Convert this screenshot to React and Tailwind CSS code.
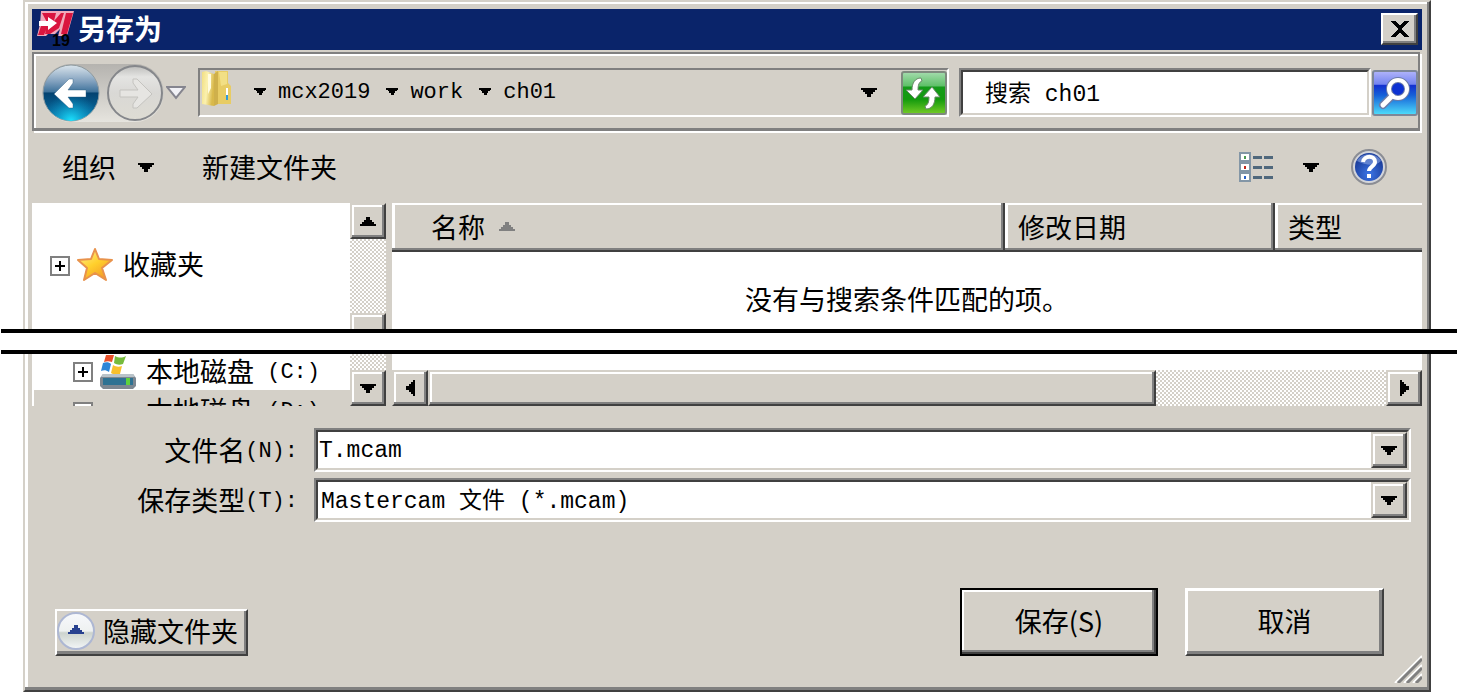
import React from 'react';
import clsx from 'clsx';

const MONO = "font-['Liberation_Mono','Noto_Sans_CJK_SC',monospace]";
const RAISED =
  'flex shrink-0 items-center justify-center bg-[#d4d0c8] border-2 border-t-[#d4d0c8] border-l-[#d4d0c8] border-r-[#404040] border-b-[#404040] shadow-[inset_-2px_-2px_0_#808080,inset_2px_2px_0_#fff]';
const DITHER = 'bg-[repeating-conic-gradient(#d4d0c8_0_25%,#fff_0_50%)] bg-[length:4px_4px]';
const FRAME =
  'ml-[23px] mr-[27px] border-l-2 border-r-2 border-l-[#d4d0c8] border-r-[#404040] bg-[#d4d0c8] px-[7px]';

const Mono = ({ children, className }) => (
  <span className={clsx(MONO, 'text-[22px] whitespace-pre', className)}>{children}</span>
);

const arrowPaths = {
  down: 'M0 0h16v2H14v2H12v2H10v3H6V6H4V4H2V2H0z',
  up: 'M0 9h16V7H14V5H12V3H10V0H6v3H4v2H2v2H0z',
  left: 'M9 0v16H7V14H5V12H3V10H0V6h3V4h2V2h2V0z',
  right: 'M0 0v16h2V14h2V12h2V10h3V6H6V4H4V2H2V0z',
};

const Arrow = ({ dir = 'down', className = 'h-[9px] w-4' }) => (
  <svg
    viewBox={dir === 'left' || dir === 'right' ? '0 0 9 16' : '0 0 16 9'}
    preserveAspectRatio="none"
    shapeRendering="crispEdges"
    fill="currentColor"
    className={clsx('shrink-0', className)}
  >
    <path d={arrowPaths[dir]} />
  </svg>
);

const AppLogo = () => (
  <svg viewBox="0 0 37 38" className="h-[38px] w-[37px] shrink-0 overflow-visible">
    <path d="M4 0h33l-7 25h-9l2-7-5 5h-7l-2 2H0l3-12z" fill="#f0a9ba" />
    <path d="M5 2h14l-2 8 7-8h3l-5 15-9 6H8l1-4-2 5H1l3-9h8z" fill="#d9153f" />
    <path d="M29 2h7l-6 21h-6z" fill="#d9153f" />
    <path d="M2 10h9V6l9 6-9 7v-4H2z" fill="#fff" />
    <text x="15" y="35" fontFamily="Liberation Sans" fontWeight="bold" fontSize="16" fill="#000">19</text>
  </svg>
);

const BackIcon = () => (
  <svg viewBox="0 0 58 58" className="size-[58px]">
    <defs>
      <linearGradient id="backTop" x1="0" y1="0" x2="0" y2="1">
        <stop offset="0" stopColor="#dbe5ec" />
        <stop offset="0.3" stopColor="#7f9fbd" />
        <stop offset="0.48" stopColor="#3e729b" />
        <stop offset="0.5" stopColor="#034270" />
        <stop offset="1" stopColor="#0a78ad" />
      </linearGradient>
      <radialGradient id="backGlow" cx="0.5" cy="1" r="0.5">
        <stop offset="0" stopColor="#1ce4ff" />
        <stop offset="1" stopColor="#0a9bd3" stopOpacity="0" />
      </radialGradient>
    </defs>
    <circle cx="29" cy="29" r="28" fill="url(#backTop)" stroke="#8e9a9f" strokeWidth="1" />
    <circle cx="29" cy="29" r="28" fill="url(#backGlow)" />
    <path d="M12 30 27 15h4v4l-5 7h18v7H26l5 7v4h-4z" fill="#fff" stroke="#2b5b80" strokeOpacity="0.4" />
  </svg>
);

const ForwardIcon = () => (
  <svg viewBox="0 0 58 58" className="size-[58px]">
    <defs>
      <linearGradient id="fwd" x1="0" y1="0" x2="0" y2="1">
        <stop offset="0" stopColor="#bdbdbb" />
        <stop offset="0.2" stopColor="#e4e4e2" />
        <stop offset="0.5" stopColor="#d9d8d5" />
        <stop offset="1" stopColor="#dedcd3" />
      </linearGradient>
    </defs>
    <circle cx="29" cy="29" r="27" fill="url(#fwd)" stroke="#85878b" strokeWidth="2" />
    <path d="M46 30 31 15h-4v4l5 7H14v7h18l-5 7v4h4z" fill="#e6e5e2" stroke="#c4c3bf" />
  </svg>
);

const FolderIcon = () => (
  <svg viewBox="0 0 32 37" className="h-[37px] w-8 shrink-0">
    <defs>
      <linearGradient id="folder" x1="0" y1="0" x2="1" y2="0.3">
        <stop offset="0" stopColor="#f1de81" />
        <stop offset="0.5" stopColor="#fbf1af" />
        <stop offset="1" stopColor="#d9b94b" />
      </linearGradient>
    </defs>
    <path d="M14 1h13v12l3 3v18H15z" fill="#e8cc64" />
    <path d="M18 2h8v12l-6 2z" fill="#f2df85" />
    <path d="m1 2 4-1 8 3v32L1 34z" fill="url(#folder)" />
    <path d="m13 4 4-3v33l-4 2z" fill="#cfb04b" />
    <path d="M7 4h3v14l-3 6z" fill="#fffbe0" />
    <path d="M25 18h2v11h-2z" fill="#fff" />
    <path d="M25 25h2v5h-2z" fill="#2f9bdb" />
  </svg>
);

const RefreshIcon = () => (
  <svg viewBox="0 0 46 44" className="h-11 w-[46px]">
    <defs>
      <linearGradient id="refresh" x1="0" y1="0" x2="0" y2="1">
        <stop offset="0" stopColor="#a5dcae" />
        <stop offset="0.33" stopColor="#5fc069" />
        <stop offset="0.36" stopColor="#149a1a" />
        <stop offset="0.65" stopColor="#139a0e" />
        <stop offset="1" stopColor="#76cc26" />
      </linearGradient>
    </defs>
    <rect x="1" y="1" width="44" height="42" rx="2" fill="url(#refresh)" stroke="#7e8a7e" strokeWidth="2" />
    <path
      d="M20 7c-6 0-9 5-9 12H5l9 9 8-9h-5c0-5 1-8 4-9zM25 38c6 0 9-5 9-12h5l-8-10-9 10h6c0 5-1 8-4 9z"
      fill="#fff"
      stroke="#6a8a6a"
    />
  </svg>
);

const SearchIcon = () => (
  <svg viewBox="0 0 46 46" className="size-[46px]">
    <defs>
      <linearGradient id="search" x1="0" y1="0" x2="0" y2="1">
        <stop offset="0" stopColor="#b2b5fb" />
        <stop offset="0.3" stopColor="#7484f0" />
        <stop offset="0.33" stopColor="#1230cf" />
        <stop offset="0.55" stopColor="#1560d8" />
        <stop offset="1" stopColor="#4fe0fb" />
      </linearGradient>
    </defs>
    <rect x="1" y="1" width="44" height="44" rx="2" fill="url(#search)" stroke="#7d8798" strokeWidth="2" />
    <path d="m20 26-9 9" stroke="#6b7ba8" strokeWidth="8" strokeLinecap="round" />
    <circle cx="26" cy="19" r="9" fill="#0d32d2" stroke="#6b7ba8" strokeWidth="6" />
    <path d="m20 26-9 9" stroke="#fff" strokeWidth="5" strokeLinecap="round" />
    <circle cx="26" cy="19" r="9" fill="none" stroke="#fff" strokeWidth="4" />
  </svg>
);

const ViewsIcon = () => (
  <svg viewBox="0 0 34 30" shapeRendering="crispEdges" className="h-[30px] w-[34px]">
    {['#4d9a52', '#c0281c', '#2a63c8'].map((color, i) => (
      <g key={color} transform={`translate(0 ${i * 10})`}>
        <rect x="1" y="1" width="10" height="8" fill="#fff" stroke="#8396a6" strokeWidth="2" />
        <rect x="5" y="4" width="2" height="3" fill={color} />
        <path d="M14 5h9M25 5h9" stroke="#50687c" strokeWidth="3" />
      </g>
    ))}
  </svg>
);

const HelpIcon = () => (
  <svg viewBox="0 0 36 36" className="size-9">
    <defs>
      <radialGradient id="help" cx="0.5" cy="0.75" r="0.6">
        <stop offset="0" stopColor="#3d76e6" />
        <stop offset="1" stopColor="#1c3f9e" />
      </radialGradient>
    </defs>
    <circle cx="18" cy="18" r="17" fill="#d3d5db" stroke="#8b8d94" strokeWidth="2" />
    <circle cx="18" cy="18" r="14" fill="url(#help)" />
    <path d="M6 12C10 3 26 3 30 12 24 18 14 16 6 12z" fill="#8ba6e4" opacity="0.6" />
    <path d="M12 13c1-7 12-7 12 0 0 4-6 5-6 9" fill="none" stroke="#fff" strokeWidth="4" />
    <rect x="16" y="25" width="4" height="4" fill="#fff" />
  </svg>
);

const StarIcon = () => (
  <svg viewBox="0 0 36 34" className="h-[34px] w-9 shrink-0">
    <defs>
      <linearGradient id="star" x1="0" y1="0" x2="0.7" y2="1">
        <stop offset="0" stopColor="#fff2a0" />
        <stop offset="0.55" stopColor="#ffd02c" />
        <stop offset="1" stopColor="#f39a26" />
      </linearGradient>
    </defs>
    <path
      d="m18 2 4 10 13 1-10 8 4 12-11-7-11 7 3-12-9-8 13-1z"
      fill="url(#star)"
      stroke="#e8924c"
      strokeWidth="2"
      strokeLinejoin="round"
    />
  </svg>
);

const DriveIcon = () => (
  <svg viewBox="0 0 36 34" className="h-[34px] w-9 shrink-0">
    <path d="M6 0c3-1 5-1 8 0l-2 7c-3-1-5-1-8 0z" fill="#e8502a" />
    <path d="M15 1c4 2 7 2 11 0l-3 8c-3 1-6 1-9-1z" fill="#76bb3c" />
    <path d="M3 8c3-1 6-1 8 1l-2 8c-3-2-5-2-8-1z" fill="#2c86d8" />
    <path d="M13 10c3 2 6 2 9 1l-2 8c-3 1-6 1-9-1z" fill="#f8c02c" />
    <path d="M3 19h30l3 4v8l-3 3H3l-3-3v-8z" fill="#7d8791" />
    <path d="M3 19h30l2 3H1z" fill="#b9c3c9" />
    <path d="M3 23h30v7H3z" fill="#2e7293" />
    <path d="M26 23h4v7h-4z" fill="#5fd23c" />
  </svg>
);

const CollapseIcon = () => (
  <svg viewBox="0 0 38 38" className="size-[38px] shrink-0">
    <defs>
      <linearGradient id="collapse" x1="0" y1="0" x2="0" y2="1">
        <stop offset="0" stopColor="#f7f9fc" />
        <stop offset="0.5" stopColor="#eef1f1" />
        <stop offset="0.55" stopColor="#ccd3cd" />
        <stop offset="1" stopColor="#f3f6f7" />
      </linearGradient>
    </defs>
    <circle cx="19" cy="19" r="18" fill="url(#collapse)" stroke="#adb7d3" strokeWidth="2" />
    <path d="M11 22h16v-2h-2v-2h-2v-2h-2v-3h-4v3h-2v2h-2v2h-2z" fill="#27418f" shapeRendering="crispEdges" />
  </svg>
);

const Expander = () => (
  <button aria-label="展开" className="relative size-5 shrink-0 border-2 border-[#808080] bg-white">
    <span className="absolute left-[3px] top-[7px] h-0.5 w-2.5 bg-black" />
    <span className="absolute left-[7px] top-[3px] h-2.5 w-0.5 bg-black" />
  </button>
);

const Crumb = ({ children }) => (
  <div className="flex items-center">
    <Arrow className="h-[7px] w-3" />
    <a href="#" className="ml-3 mr-4 pb-1">
      <Mono>{children}</Mono>
    </a>
  </div>
);

const Combo = ({ children }) => (
  <div className="flex h-11 min-w-0 flex-1 border-2 border-t-[#808080] border-l-[#808080] border-r-white border-b-white bg-white">
    <div className="flex min-w-0 flex-1 border-2 border-t-[#404040] border-l-[#404040] border-r-[#d4d0c8] border-b-[#d4d0c8]">
      {children}
      <button aria-label="展开列表" className={clsx(RAISED, 'w-9')}>
        <Arrow />
      </button>
    </div>
  </div>
);

const columns = ['名称', '修改日期', '类型'];

export default function App() {
  return (
    <div className="min-w-[1100px] bg-white font-['Noto_Sans_CJK_SC',sans-serif] text-[27px] leading-9 text-black">
      {/* Upper part of the dialog */}
      <div className={clsx(FRAME, 'border-t-2 border-t-[#d4d0c8] pt-[7px] shadow-[inset_-2px_0_0_#808080,inset_3px_2px_0_#fff]')}>
        <header className="flex h-[41px] items-center bg-[#0a246a] pl-[5px] pr-1 text-white">
          <AppLogo />
          <h1 className="ml-1 flex-1 pb-1 text-[28px] font-bold">另存为</h1>
          <button
            aria-label="关闭"
            className="mb-0.5 flex h-8 w-[37px] items-center justify-center border-2 border-t-white border-l-white border-r-[#404040] border-b-[#404040] bg-[#d4d0c8] text-black shadow-[inset_-2px_-2px_0_#808080]"
          >
            <svg viewBox="0 0 18 16" className="h-4 w-[18px]" shapeRendering="crispEdges">
              <path d="M0 0h5l4 5 4-5h5l-7 8 7 8h-5l-4-5-4 5H0l7-8z" />
            </svg>
          </button>
        </header>

        {/* Navigation */}
        <div className="mb-0.5 mr-0.5 mt-0.5 flex h-[79px] items-center border-2 border-b-[3px] border-[#808080] pl-2 pt-[3px] shadow-[inset_2px_2px_0_#fff,2px_2px_0_#fff]">
          <div className="flex gap-1.5 rounded-full bg-linear-to-b from-[#b5b3af] to-[#e6e4de]">
            <button aria-label="后退"><BackIcon /></button>
            <button aria-label="前进"><ForwardIcon /></button>
          </div>
          <button aria-label="最近位置" className="ml-0.5 mr-3">
            <svg viewBox="0 0 20 14" className="h-3.5 w-5">
              <path d="M1 1h18l-9 11z" fill="#f1f1f6" stroke="#85858f" strokeWidth="2" />
            </svg>
          </button>
          <nav className="flex h-[49px] min-w-0 flex-1 items-center border-2 border-t-[#808080] border-l-[#808080] border-r-white border-b-white pl-px">
            <div className="pb-2"><FolderIcon /></div>
            <div className="ml-[21px] flex flex-1 items-center pb-0.5">
              <Crumb>mcx2019</Crumb>
              <Crumb>work</Crumb>
              <Crumb>ch01</Crumb>
            </div>
            <button aria-label="历史记录" className="mr-6"><Arrow /></button>
            <button aria-label="刷新"><RefreshIcon /></button>
          </nav>
          <div className="ml-2.5 mr-px h-[49px] w-[412px] border-2 border-t-[#808080] border-l-[#808080] border-r-white border-b-white">
            <input
              type="text"
              aria-label="搜索"
              placeholder="搜索 ch01"
              className={clsx(MONO, 'block h-full w-full border-2 border-t-[#404040] border-l-[#404040] border-r-[#d4d0c8] border-b-[#d4d0c8] bg-white pl-[22px] pt-1 text-[23px] outline-none placeholder:text-black')}
            />
          </div>
          <button aria-label="开始搜索"><SearchIcon /></button>
        </div>

        {/* Toolbar */}
        <div className="flex h-[70px] items-center pb-0.5 pl-[30px] pr-[35px]">
          <button className="flex items-center gap-[22px]">
            组织
            <Arrow />
          </button>
          <button className="ml-12">新建文件夹</button>
          <button aria-label="视图" className="ml-auto"><ViewsIcon /></button>
          <button aria-label="更多视图" className="ml-[30px] mr-8"><Arrow /></button>
          <button aria-label="帮助"><HelpIcon /></button>
        </div>

        <div className="flex h-[126px] overflow-hidden">
          <div className="flex w-[318px] shrink-0 items-center bg-white pl-[18px]">
            <Expander />
            <span className="ml-[7px] pb-1"><StarIcon /></span>
            <span className="ml-2.5 pb-1">收藏夹</span>
          </div>
          <div className={clsx(DITHER, 'flex w-9 shrink-0 flex-col justify-between')}>
            <button aria-label="向上滚动" className={clsx(RAISED, 'h-9')}><Arrow dir="up" /></button>
            <div className="h-4 overflow-hidden">
              <div className={clsx(RAISED, 'h-9')} />
            </div>
          </div>
          <div className="ml-1.5 min-w-0 flex-1 bg-white">
            <table className="w-full table-fixed border-separate border-spacing-0">
              <colgroup>
                <col />
                <col className="w-[270px]" />
                <col className="w-[147px]" />
              </colgroup>
              <thead>
                <tr>
                  {columns.map((name, i) => (
                    <th
                      key={name}
                      className={clsx(
                        'h-[49px] border-b-2 border-[#404040] bg-[#d4d0c8] p-0 text-left font-normal',
                        i === 0 ? 'pl-[39px]' : 'pl-[13px]',
                        i < 2
                          ? 'border-r-2 shadow-[inset_-2px_-2px_0_#808080,inset_3px_2px_0_#fff]'
                          : 'shadow-[inset_0_-2px_0_#808080,inset_3px_2px_0_#fff]'
                      )}
                    >
                      <div className="flex items-center">
                        {name}
                        {i === 0 && <Arrow dir="up" className="ml-3.5 h-[9px] w-4 text-[#808080]" />}
                      </div>
                    </th>
                  ))}
                </tr>
              </thead>
              <tbody>
                <tr>
                  <td colSpan={3} className="h-[77px] p-0 pt-4 text-center">没有与搜索条件匹配的项。</td>
                </tr>
              </tbody>
            </table>
          </div>
        </div>
      </div>

      {/* Cut through the dialog */}
      <div className="mx-px h-[25px] border-y-4 border-black bg-white" />

      {/* Lower part of the dialog */}
      <div className={clsx(FRAME, 'relative border-b-2 border-b-[#404040] shadow-[inset_-2px_-3px_0_#808080,inset_3px_0_0_#fff]')}>
        <div className="flex h-[52px] overflow-hidden">
          <div className="w-[318px] shrink-0 bg-white">
            <div className="flex h-9 items-center pl-[41px]">
              <Expander />
              <span className="ml-[7px]"><DriveIcon /></span>
              <span className="ml-2.5 flex items-center pb-0.5">本地磁盘<Mono className="pt-1"> (C:)</Mono></span>
            </div>
            <div className="ml-0.5 flex h-11 items-center bg-[#d4d0c8] pl-[39px]">
              <Expander />
              <span className="ml-[53px] flex items-center pb-1">本地磁盘<Mono className="pt-1"> (D:)</Mono></span>
            </div>
          </div>
          <div className={clsx(DITHER, 'flex w-9 shrink-0 flex-col justify-end')}>
            <button aria-label="向下滚动" className={clsx(RAISED, 'h-9')}><Arrow /></button>
          </div>
          <div className="ml-1.5 flex min-w-0 flex-1 flex-col justify-end bg-white">
            <div className={clsx(DITHER, 'flex h-9')}>
              <button aria-label="向左滚动" className={clsx(RAISED, 'w-9')}>
                <Arrow dir="left" className="h-4 w-[9px]" />
              </button>
              <div className="flex flex-1">
                <div className={clsx(RAISED, 'w-[76%]')} />
              </div>
              <button aria-label="向右滚动" className={clsx(RAISED, 'w-9')}>
                <Arrow dir="right" className="h-4 w-[9px]" />
              </button>
            </div>
          </div>
        </div>

        {/* File name and type */}
        <div className="flex flex-col gap-1.5 pr-[11px] pt-[22px]">
          <div className="flex items-center gap-4">
            <label htmlFor="filename" className="flex w-[266px] shrink-0 items-center justify-end">
              文件名<Mono className="pt-1">(N):</Mono>
            </label>
            <Combo>
              <input
                id="filename"
                defaultValue="T.mcam"
                className={clsx(MONO, 'min-w-0 flex-1 bg-white pl-px pt-0.5 text-[23px] outline-none')}
              />
            </Combo>
          </div>
          <div className="flex items-center gap-4">
            <label htmlFor="filetype" className="flex w-[266px] shrink-0 items-center justify-end">
              保存类型<Mono className="pt-1">(T):</Mono>
            </label>
            <Combo>
              <select
                id="filetype"
                className={clsx(MONO, 'min-w-0 flex-1 appearance-none bg-white pl-[3px] pt-0.5 text-[23px] outline-none')}
              >
                <option>Mastercam 文件 (*.mcam)</option>
              </select>
            </Combo>
          </div>
        </div>

        <footer className="flex items-end pb-[34px] pl-[23px] pr-[38px] pt-[66px]">
          <button className="flex h-[47px] w-[193px] items-center gap-2 border-2 border-t-white border-l-white border-r-[#404040] border-b-[#404040] pb-1 shadow-[inset_-2px_-3px_0_#808080]">
            <CollapseIcon />
            隐藏文件夹
          </button>
          <button className="ml-auto h-[68px] w-[198px] border-2 border-black pb-0.5 shadow-[inset_-2px_-2px_0_#404040,inset_-4px_-4px_0_#808080,inset_2px_2px_0_#fff]">
            保存(S)
          </button>
          <button className="ml-[27px] h-[68px] w-[199px] border-2 border-t-white border-l-white border-r-[#404040] border-b-[#404040] pb-0.5 shadow-[inset_-3px_-3px_0_#808080,inset_1px_1px_0_#fff]">
            取消
          </button>
        </footer>

        {/* Resize grip */}
        <svg viewBox="0 0 28 28" className="absolute bottom-[7px] right-[7px] size-7">
          <path d="M1 28 28 1M10 28l18-18M19 28l9-9" stroke="#fff" strokeWidth="2" />
          <path d="M4 28 28 4M13 28l15-15M22 28l6-6" stroke="#808080" strokeWidth="3" />
        </svg>
      </div>
    </div>
  );
}
